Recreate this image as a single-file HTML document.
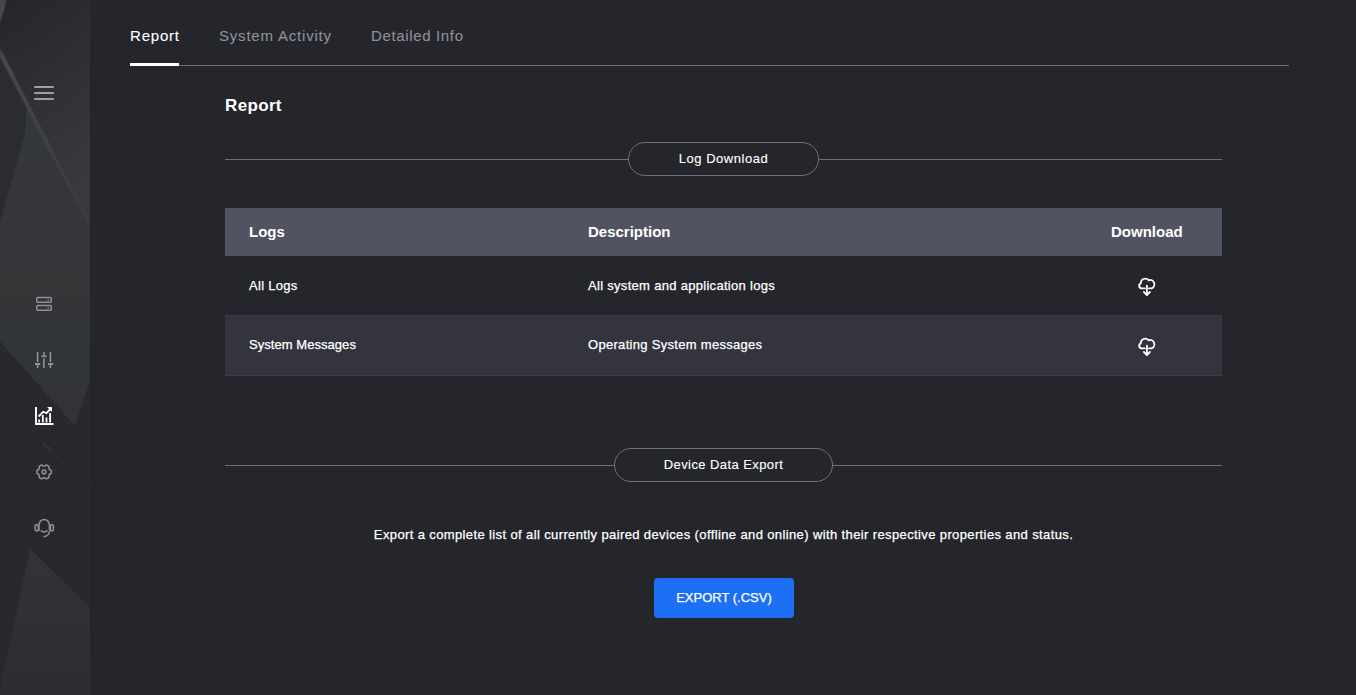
<!DOCTYPE html>
<html><head><meta charset="utf-8">
<style>
*{margin:0;padding:0;box-sizing:border-box}
html,body{width:1356px;height:695px;overflow:hidden;background:#25262c;font-family:"Liberation Sans",sans-serif;color:#fff}
.row span,.btn,.para{-webkit-text-stroke:0.25px currentColor}
.pill{-webkit-text-stroke:0.12px currentColor}
.tab{-webkit-text-stroke:0.1px currentColor}
#side{position:absolute;left:0;top:0;width:90px;height:695px;background:#2c2d31;overflow:hidden}
#side svg.bg{position:absolute;left:0;top:0}
.ico{position:absolute;left:0;width:90px}
.abs{position:absolute;white-space:nowrap}
.tab{position:absolute;top:27px;font-size:15px;color:#8f909b;letter-spacing:0.8px}
.line{position:absolute;height:1px;background:#6d6c7b}
.pill{position:absolute;height:34px;border:1px solid #706f7f;border-radius:17px;background:#25262c;font-size:13px;text-align:center;line-height:32px;color:#fff;letter-spacing:0.55px}
.th{position:absolute;top:208px;left:225px;width:997px;height:48px;background:#525360}
.th span{position:absolute;top:15px;font-size:15px;font-weight:bold}
.row{position:absolute;left:225px;width:997px;height:60px}
.row span{position:absolute;top:22px;font-size:13px;letter-spacing:0.3px}
.btn{position:absolute;left:654px;top:578px;width:140px;height:40px;background:#1d70f3;border-radius:4px;font-size:13px;text-align:center;line-height:40px}
</style></head><body>
<div id="side">
<svg class="bg" width="90" height="695" viewBox="0 0 90 695">
<defs>
<linearGradient id="g1" x1="0" y1="0" x2="0.3" y2="1"><stop offset="0" stop-color="#252629"/><stop offset="1" stop-color="#393a3e"/></linearGradient>
<linearGradient id="g2" x1="0" y1="0" x2="0" y2="1"><stop offset="0" stop-color="#37383c"/><stop offset="1" stop-color="#323337"/></linearGradient>
<linearGradient id="g3" x1="0" y1="0" x2="0" y2="1"><stop offset="0" stop-color="#333438"/><stop offset="1" stop-color="#2c2d31"/></linearGradient>
<linearGradient id="gs" x1="0" y1="0" x2="1" y2="0"><stop offset="0" stop-color="#505157"/><stop offset="0.5" stop-color="#46474c"/><stop offset="1" stop-color="#3b3c40"/></linearGradient>
<filter id="bl" x="-10%" y="-10%" width="120%" height="120%"><feGaussianBlur stdDeviation="0.6"/></filter>
<filter id="bl2" x="-10%" y="-10%" width="120%" height="120%"><feGaussianBlur stdDeviation="0.9"/></filter>
</defs>
<rect width="90" height="695" fill="#29292d"/>
<polygon points="0,0 90,0 90,227 0,54" fill="url(#g1)"/>
<polygon points="0,54 90,227 90,380 75,426 0,341" fill="url(#g2)" filter="url(#bl)"/>
<polygon points="0,54 27,106 25,133 0,222" fill="#2b2c30"/>
<polygon points="30,549 90,607 90,695 0,695 0,690" fill="url(#g3)"/>
<polygon points="0,48 90,224 90,228 0,56" fill="url(#gs)" filter="url(#bl2)"/>
<polygon points="0,0 6.5,0 4.5,9 0,23" fill="#45464b" filter="url(#bl)"/>
<line x1="37" y1="435" x2="90" y2="495" stroke="#2b2c30" stroke-width="3" filter="url(#bl2)"/>
<line x1="44" y1="443" x2="51" y2="451" stroke="#35363a" stroke-width="2.5" filter="url(#bl2)"/>
</svg>
<svg class="bg" width="90" height="695" viewBox="0 0 90 695">
<g fill="#a0a0ac"><rect x="34" y="86" width="20" height="2" rx="1"/><rect x="34" y="92" width="20" height="2" rx="1"/><rect x="34" y="98" width="20" height="2" rx="1"/></g>
<g fill="none" stroke="#8f8f9b" stroke-width="1.5">
<rect x="36.75" y="297.6" width="14.5" height="4.7" rx="1"/>
<rect x="36.75" y="305.5" width="14.5" height="4.7" rx="1"/>
</g>
<g fill="#8f8f9b"><circle cx="48.2" cy="300.3" r="0.8"/><circle cx="48.2" cy="307.8" r="0.8"/></g>
<g stroke="#8f8f9b" stroke-width="1.6" fill="none">
<path d="M37.6 352V362M37.6 365V368M43.9 352V355M43.9 358.5V368M50.4 352V362M50.4 365V368"/>
<path d="M35 364H40.2M41.5 356.2H46.5M48 364H53.2" stroke-width="1.9"/>
</g>
<g stroke="#ffffff" fill="none">
<path d="M36 407V424H53.5" stroke-width="1.9"/>
<path d="M39.1 419.5V422.5M42.8 415V422.5M46.5 417.5V422.5M50.1 413V422.5" stroke-width="1.8"/>
<path d="M38.6 416.5L43.2 411.8L46.3 413.2L50.5 409" stroke-width="1.8"/>
</g>
<polygon fill="#fff" points="47.1,407 52,407 52,411.9"/>
<g stroke="#8f8f9b" stroke-width="1.5" fill="none">
<path d="M49.12 469.00 L49.93 469.78 L51.36 470.49 L51.36 473.31 L49.93 474.02 L49.12 474.80 L48.85 475.89 L48.95 477.48 L46.51 478.90 L45.18 478.01 L44.10 477.70 L43.02 478.01 L41.69 478.90 L39.25 477.48 L39.35 475.89 L39.08 474.80 L38.27 474.02 L36.84 473.31 L36.84 470.49 L38.27 469.78 L39.08 469.00 L39.35 467.91 L39.25 466.32 L41.69 464.90 L43.02 465.79 L44.10 466.10 L45.18 465.79 L46.51 464.90 L48.95 466.32 L48.85 467.91Z" stroke-linejoin="round"/>
<circle cx="44.1" cy="471.9" r="1.9"/>
</g>
<g stroke="#8f8f9b" stroke-width="1.5" fill="none">
<path d="M39 531V524.8A5.2 5.2 0 0 1 49.4 524.8V530"/>
<rect x="35.2" y="524.8" width="3" height="5.9" rx="0.8"/>
<rect x="50.4" y="524.8" width="2.9" height="5.9" rx="0.8"/>
<path d="M40.7 530.6Q44 533.2 47.6 530.6"/>
<path d="M49.6 530.5Q49.3 536.3 43.5 536.8"/>
</g>
</svg>
</div>

<div class="tab" style="left:130px;color:#fff">Report</div>
<div class="tab" style="left:219px">System Activity</div>
<div class="tab" style="left:371px;letter-spacing:0.65px">Detailed Info</div>
<div class="line" style="left:130px;top:65px;width:1159px"></div>
<div class="abs" style="left:130px;top:63px;width:49px;height:3px;background:#fff"></div>

<div class="abs" style="left:225px;top:96px;font-size:17px;font-weight:bold;letter-spacing:0.35px">Report</div>

<div class="line" style="left:225px;top:159px;width:997px"></div>
<div class="pill" style="left:628px;top:142px;width:191px">Log Download</div>

<div class="th"><span style="left:24px">Logs</span><span style="left:363px">Description</span><span style="left:886px">Download</span></div>
<div class="abs" style="left:1132px;top:271px"><svg width="30" height="30" viewBox="0 0 30 30" fill="none" stroke="#fff" stroke-width="1.8" stroke-linejoin="round"><path d="M12.9 17.3H9.8A2.6 2.6 0 0 1 8.8 12.3A4.4 4.4 0 0 1 16.6 9.3A4.2 4.2 0 0 1 19.6 17.3H16.9" stroke-linecap="round"/><path d="M14.9 13.9V23.6"/><path d="M11.9 21L14.9 24L17.9 21" stroke-linecap="round"/></svg></div><div class="abs" style="left:1132px;top:331px;z-index:2"><svg width="30" height="30" viewBox="0 0 30 30" fill="none" stroke="#fff" stroke-width="1.8" stroke-linejoin="round"><path d="M12.9 17.3H9.8A2.6 2.6 0 0 1 8.8 12.3A4.4 4.4 0 0 1 16.6 9.3A4.2 4.2 0 0 1 19.6 17.3H16.9" stroke-linecap="round"/><path d="M14.9 13.9V23.6"/><path d="M11.9 21L14.9 24L17.9 21" stroke-linecap="round"/></svg></div>
<div class="row" style="top:256px"><span style="left:24px">All Logs</span><span style="left:363px">All system and application logs</span></div>
<div class="row" style="top:315px;height:61px;background:#33343d;border-top:1px solid #3a3b45;border-bottom:1px solid #3d3e48"><span style="left:24px;top:21px;letter-spacing:0.05px">System Messages</span><span style="left:363px;top:21px">Operating System messages</span></div>

<div class="line" style="left:225px;top:465px;width:997px"></div>
<div class="pill" style="left:614px;top:448px;width:219px;letter-spacing:0.42px">Device Data Export</div>

<div class="abs para" style="left:0;width:1447px;text-align:center;top:527px;font-size:13px;letter-spacing:0.38px">Export a complete list of all currently paired devices (offline and online) with their respective properties and status.</div>

<div class="btn">EXPORT (.CSV)</div>
</body></html>
